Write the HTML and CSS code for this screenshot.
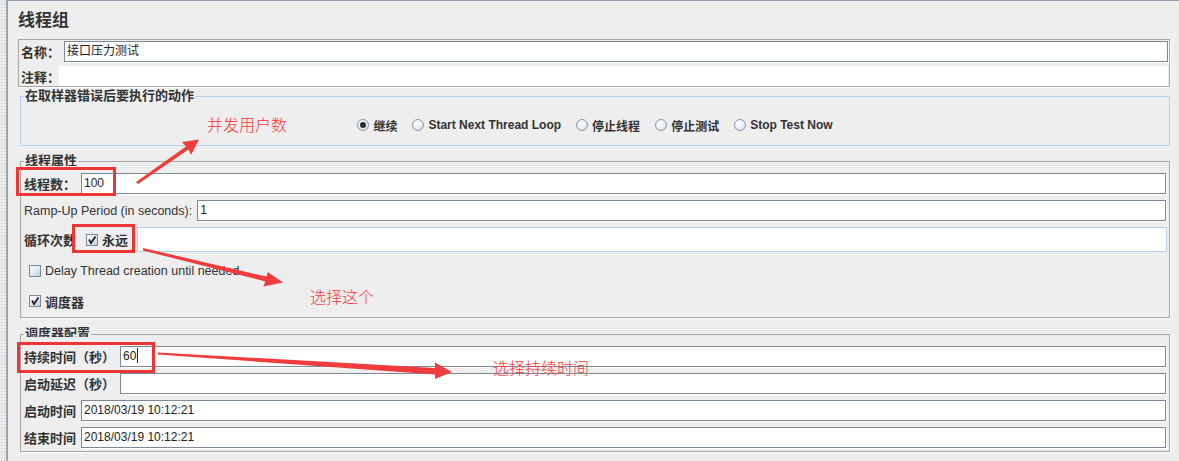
FILE: index.html
```html
<!DOCTYPE html>
<html lang="zh-CN">
<head>
    <meta charset="UTF-8">
    <title>线程组</title>
    <link rel="stylesheet" href="styles.css">
</head>
<body>
    <div class="frame">
        <div class="gutter"></div>

        <div class="editor">
            <h1 class="title">线程组</h1>

            <div class="name-panel">
                <div class="name-row">
                    <span class="lbl name-lbl">名称：</span>
                    <div class="field">接口压力测试</div>
                </div>
                <div class="comment-row">
                    <span class="lbl comment-lbl">注释：</span>
                    <div class="comment-area"></div>
                </div>
            </div>

            <fieldset class="group group-blue">
                <legend>在取样器错误后要执行的动作</legend>
                <div class="radios">
                    <label class="opt"><span class="radio checked"></span>继续</label>
                    <label class="opt"><span class="radio"></span>Start Next Thread Loop</label>
                    <label class="opt"><span class="radio"></span>停止线程</label>
                    <label class="opt"><span class="radio"></span>停止测试</label>
                    <label class="opt"><span class="radio"></span>Stop Test Now</label>
                </div>
            </fieldset>

            <fieldset class="group group-props">
                <legend><span class="clip clip-props">线程属性</span></legend>
                <div class="form-row">
                    <span class="lbl">线程数：</span>
                    <div class="field">100</div>
                </div>
                <div class="form-row">
                    <span class="lbl plain">Ramp-Up Period (in seconds):</span>
                    <div class="field">1</div>
                </div>
                <div class="form-row loop-row">
                    <span class="lbl">循环次数</span>
                    <label class="check-opt forever">
                        <span class="checkbox checked">
                            <svg viewBox="0 0 12 12" width="12" height="12"><path d="M3 5.5 L5 9 L9.5 2.5" fill="none" stroke="#222" stroke-width="1.8"/></svg>
                        </span>永远
                    </label>
                    <div class="field field-off"></div>
                </div>
                <label class="check-row delay-row">
                    <span class="checkbox"></span><span class="plain">Delay Thread creation until needed</span>
                </label>
                <label class="check-row sched-row">
                    <span class="checkbox checked">
                        <svg viewBox="0 0 12 12" width="12" height="12"><path d="M3 5.5 L5 9 L9.5 2.5" fill="none" stroke="#222" stroke-width="1.8"/></svg>
                    </span><span class="lbl">调度器</span>
                </label>
            </fieldset>

            <fieldset class="group group-sched">
                <legend><span class="clip clip-sched">调度器配置</span></legend>
                <div class="form-row">
                    <span class="lbl">持续时间（秒）</span>
                    <div class="field">60<span class="caret"></span></div>
                </div>
                <div class="form-row">
                    <span class="lbl">启动延迟（秒）</span>
                    <div class="field"></div>
                </div>
                <div class="form-row">
                    <span class="lbl">启动时间</span>
                    <div class="field">2018/03/19 10:12:21</div>
                </div>
                <div class="form-row last">
                    <span class="lbl">结束时间</span>
                    <div class="field">2018/03/19 10:12:21</div>
                </div>
            </fieldset>
        </div>

        <!-- red markup drawn on top of the screenshot -->
        <svg class="marks" width="1179" height="461" viewBox="0 0 1179 461">
            <g fill="none" stroke="#ee3535" stroke-width="3">
                <rect x="17.5" y="168.5" width="97" height="26"/>
                <rect x="73.5" y="225.5" width="60" height="26"/>
                <rect x="18.5" y="343.5" width="135" height="28"/>
            </g>
            <g fill="#f03c3c">
                <polygon points="136,182 186,146.5 182,142 199,139.5 191,155 188.5,149.5 138,184"/>
                <polygon points="143,248 266.6,276.6 267.6,272 283,282.5 263.3,286.5 265.4,281.4 143,250.5"/>
                <polygon points="158,352.5 435,368 435,362.5 452,372 435,379 435,374.5 158,354.5"/>
            </g>
            <g class="note">
                <text x="207" y="131">并发用户数</text>
                <text x="310" y="303">选择这个</text>
                <text x="493" y="374">选择持续时间</text>
            </g>
        </svg>
    </div>
</body>
</html>
```

FILE: styles.css
```css
body {
    margin: 0;
    background: #eeeeee;
    font-family: "Liberation Sans", "Noto Sans CJK SC", sans-serif;
    color: #333333;
}

.frame {
    position: relative;
    display: flex;
    height: 461px;
    overflow: hidden;
}

.gutter {
    width: 6px;
    background-color: #eeeeee;
    background-image: radial-gradient(#b4b4b4 0.7px, transparent 0.9px);
    background-size: 3px 3px;
    border-right: 2px solid #98a4b0;
}

.editor {
    flex: 1;
    border-top: 1px solid #8c9aa9;
    padding: 0 9px 0 10px;
}

.title {
    margin: 0 0 6px;
    padding-top: 8px;
    font-size: 17px;
    line-height: 24px;
    font-weight: bold;
    color: #333;
}

.lbl {
    font-size: 13px;
    font-weight: bold;
    white-space: nowrap;
    color: #333;
}

.lbl.plain,
.plain {
    font-size: 12.5px;
    font-weight: normal;
    color: #333;
}

/* name / comment */
.name-panel {
    border: 1px solid #a6a6a6;
    box-shadow: 1px 1px 0 #fff;
    padding: 1px 1px 0 2px;
}

.name-row {
    display: flex;
    align-items: center;
    height: 21px;
}

.name-lbl {
    margin-right: 4px;
}

.comment-row {
    display: flex;
    align-items: center;
    margin-top: 4px;
    height: 20px;
}

.comment-lbl {
    width: 38px;
}

.comment-area {
    flex: 1;
    height: 20px;
    background: #fff;
}

.field {
    flex: 1;
    height: 21px;
    box-sizing: border-box;
    border: 1px solid #7a8a99;
    box-shadow: 1px 1px 0 #fff;
    background: #fff;
    padding-left: 2px;
    font-size: 12px;
    line-height: 19px;
    color: #222;
    white-space: nowrap;
}

.field-off {
    height: 25px;
    border-color: #b8cfe5;
    box-shadow: none;
    margin-left: 9px;
    margin-right: -1px;
}

.caret {
    display: inline-block;
    width: 1px;
    height: 15px;
    margin-left: 1px;
    background: #222;
    vertical-align: -3px;
}

/* titled groups */
.group {
    margin: 0 0 0 2px;
    min-width: 0;
    border: 1px solid #a6a6a6;
    box-shadow: 1px 1px 0 #fff;
    padding: 4px 3px 3px 3px;
}

.group legend {
    padding: 0 1px;
    height: 16px;
    font-size: 13px;
    line-height: 16px;
    font-weight: bold;
    color: #333;
}

/* the swing title is cut off by the panel below it */
.clip {
    display: inline-block;
    vertical-align: top;
    overflow: hidden;
}

.clip-props {
    height: 13px;
}

.clip-sched {
    height: 11px;
}

.group-blue {
    margin-top: 1px;
    border-color: #b8cfe5;
    box-shadow: none;
    padding: 13px 3px 12px;
}

.group-props {
    margin-top: 7px;
    padding-bottom: 8px;
}

.group-sched {
    margin-top: 8px;
}

.radios {
    display: flex;
    justify-content: center;
    gap: 15px;
    height: 16px;
    align-items: center;
}

.opt {
    display: flex;
    align-items: center;
    gap: 4px;
    font-size: 12px;
    font-weight: bold;
    color: #333;
    white-space: nowrap;
}

.radio {
    width: 12px;
    height: 12px;
    box-sizing: border-box;
    border-radius: 50%;
    border: 1px solid #8797a8;
    background: radial-gradient(circle at 35% 35%, #ffffff 0%, #e9eff5 55%, #c3d2e2 100%);
    display: flex;
    align-items: center;
    justify-content: center;
}

.radio.checked::after {
    content: "";
    width: 6px;
    height: 6px;
    border-radius: 50%;
    background: #2b2b2b;
}

.form-row {
    display: flex;
    align-items: center;
    gap: 5px;
    height: 21px;
    margin-bottom: 6px;
}

.form-row.last {
    margin-bottom: 0;
}

.loop-row {
    height: 25px;
    gap: 0;
    margin-bottom: 0;
}

.check-opt {
    display: flex;
    align-items: center;
    gap: 4px;
    font-size: 13px;
    font-weight: bold;
    color: #333;
    white-space: nowrap;
}

.forever {
    margin-left: 10px;
}

.checkbox {
    width: 12px;
    height: 12px;
    box-sizing: border-box;
    border: 1px solid #7a8a99;
    background: linear-gradient(135deg, #ffffff 0%, #dce6f0 60%, #bccde0 100%);
    display: inline-flex;
    align-items: center;
    justify-content: center;
    flex-shrink: 0;
}

.checkbox svg {
    display: block;
    margin: -1px;
}

.check-row {
    display: flex;
    align-items: center;
    gap: 4px;
    height: 16px;
    padding-left: 5px;
}

.delay-row {
    margin-top: 11px;
}

.sched-row {
    margin-top: 14px;
}

/* annotation layer */
.marks {
    position: absolute;
    top: 0;
    left: 0;
    pointer-events: none;
}

.note text {
    font-family: "Noto Sans CJK SC", sans-serif;
    font-size: 16px;
    font-weight: 300;
    fill: #ff3434;
}
```
